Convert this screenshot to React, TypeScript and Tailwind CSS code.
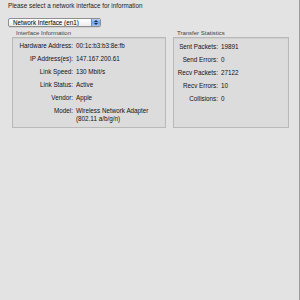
const font = { fontFamily: '"Lucida Grande", "Liberation Sans", Arial, sans-serif' };

const hwRows: [string, string[]][] = [
  ["Hardware Address:", ["00:1c:b3:b3:8e:fb"]],
  ["IP Address(es):", ["147.167.200.61"]],
  ["Link Speed:", ["130 Mbit/s"]],
  ["Link Status:", ["Active"]],
  ["Vendor:", ["Apple"]],
  ["Model:", ["Wireless Network Adapter", "(802.11 a/b/g/n)"]],
];

const statRows: [string, string][] = [
  ["Sent Packets:", "19891"],
  ["Send Errors:", "0"],
  ["Recv Packets:", "27122"],
  ["Recv Errors:", "10"],
  ["Collisions:", "0"],
];

const PopupButton = () => (
  <div className="ml-[8px] mt-[8px] flex h-[9px] w-[93px] overflow-hidden rounded-[2px] border border-[#8e8e8e] bg-gradient-to-b from-white to-[#ececec] shadow-[0_1px_0_rgba(0,0,0,0.08)]">
    <div className="flex-1 pl-[4px] text-[6.3px] leading-[7px] text-black">Network Interface (en1)</div>
    <div className="flex w-[9px] flex-col items-center justify-center gap-[1px] border-l border-[#6d8fc7] bg-gradient-to-b from-[#b7d2f5] via-[#6fa4e8] to-[#9dc3f3]">
      <svg width="4" height="2" viewBox="0 0 4 2">
        <path d="M0 2 L2 0 L4 2 Z" fill="#1a2a44" />
      </svg>
      <svg width="4" height="2" viewBox="0 0 4 2">
        <path d="M0 0 L2 2 L4 0 Z" fill="#1a2a44" />
      </svg>
    </div>
  </div>
);

const Panel = ({ title, width, children }: { title: string; width: string; children: React.ReactNode }) => (
  <div className={`flex flex-col ${width}`}>
    <div className="h-[7px] pl-[4px] text-[6px] leading-[7px] text-[#444]">{title}</div>
    <div className="h-[91px] border border-[#b9b9b9] bg-[#dcdcdc] shadow-[inset_0_1px_1px_rgba(0,0,0,0.06)]">
      {children}
    </div>
  </div>
);

export default function App() {
  return (
    <div
      className="flex h-[300px] w-[300px] flex-col border-r border-[#9d9d9d] bg-[#e3e3e3] text-[#111]"
      style={font}
    >
      <div className="pl-[8px] pt-[2px] text-[6.3px] leading-[8px] text-[#1a1a1a]">
        Please select a network interface for information
      </div>
      <PopupButton />
      <div className="ml-[12px] mt-[3px] flex gap-[7px]">
        <Panel title="Interface Information" width="w-[154px]">
          <div className="grid grid-cols-[60px_1fr] gap-x-[3px] gap-y-[5px] pt-[4px] text-[6.3px] leading-[8px]">
            {hwRows.map(([label, values]) => (
              <div key={label} className="contents">
                <div className="text-right">{label}</div>
                <div>
                  {values.map((v) => (
                    <div key={v}>{v}</div>
                  ))}
                </div>
              </div>
            ))}
          </div>
        </Panel>
        <Panel title="Transfer Statistics" width="w-[116px]">
          <div className="grid grid-cols-[44px_1fr] gap-x-[3px] gap-y-[5px] pt-[5px] text-[6.3px] leading-[8px]">
            {statRows.map(([label, value]) => (
              <div key={label} className="contents">
                <div className="text-right">{label}</div>
                <div>{value}</div>
              </div>
            ))}
          </div>
        </Panel>
      </div>
    </div>
  );
}
